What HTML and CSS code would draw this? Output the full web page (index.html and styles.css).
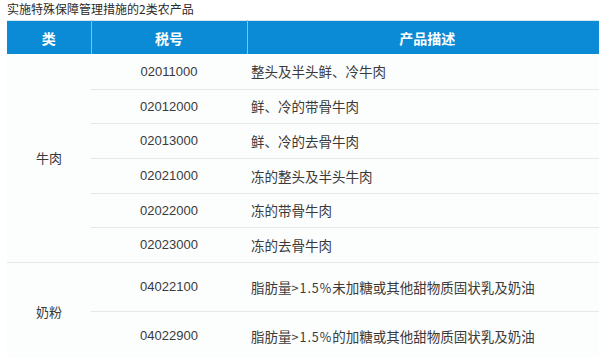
FILE: index.html
```html
<!DOCTYPE html>
<html lang="zh">
<head>
<meta charset="utf-8">
<link rel="stylesheet" href="styles.css">
</head>
<body>
<div class="title">实施特殊保障管理措施的2类农产品</div>
<table class="tbl">
  <colgroup>
    <col class="c1"><col class="c2"><col class="c3">
  </colgroup>
  <thead>
    <tr><th>类</th><th>税号</th><th>产品描述</th></tr>
  </thead>
  <tbody>
    <tr class="r35">
      <td class="cat grp-end" rowspan="6">牛肉</td>
      <td class="code">02011000</td><td class="desc">整头及半头鲜、冷牛肉</td>
    </tr>
    <tr class="r34"><td class="code">02012000</td><td class="desc">鲜、冷的带骨牛肉</td></tr>
    <tr class="r35"><td class="code">02013000</td><td class="desc">鲜、冷的去骨牛肉</td></tr>
    <tr class="r35"><td class="code">02021000</td><td class="desc">冻的整头及半头牛肉</td></tr>
    <tr class="r34"><td class="code">02022000</td><td class="desc">冻的带骨牛肉</td></tr>
    <tr class="r35"><td class="code">02023000</td><td class="desc">冻的去骨牛肉</td></tr>
    <tr class="r49">
      <td class="cat" rowspan="2">奶粉</td>
      <td class="code">04022100</td><td class="desc">脂肪量<span class="half">&gt;1.5%</span>未加糖或其他甜物质固状乳及奶油</td>
    </tr>
    <tr class="r49"><td class="code">04022900</td><td class="desc">脂肪量<span class="half">&gt;1.5%</span>的加糖或其他甜物质固状乳及奶油</td></tr>
  </tbody>
</table>
</body>
</html>
```
FILE: styles.css
```css
html, body {
  margin: 0;
  padding: 0;
  background: #ffffff;
  overflow: hidden;
}
body {
  padding: 0 0 0 7px;
  font-family: "Liberation Sans", "Noto Sans CJK SC", sans-serif;
  color: #3a3a3a;
}
.title {
  font-size: 12px;
  line-height: 18px;
  height: 20px;
  color: #2a2a2a;
  font-family: "Noto Sans CJK SC", sans-serif;
}
.tbl {
  border-collapse: collapse;
  table-layout: fixed;
  width: 600px;
  border-top: 1px solid #d8e8f2;
}
.c1 { width: 84px; }
.c2 { width: 156px; }
.c3 { width: 360px; }
.tbl th {
  background: #0b8bd5;
  color: #ffffff;
  font-family: "Noto Sans CJK SC", sans-serif;
  font-weight: bold;
  font-size: 14px;
  height: 33px;
  padding: 0;
  text-align: center;
  border-left: 1px solid #7fc2ea;
}
.tbl th:first-child { border-left: none; }
.tbl td {
  padding: 0;
  background: #fcfdfd;
  font-size: 13px;
  vertical-align: middle;
}
.tbl td.code, .tbl td.desc {
  border-bottom: 1px solid #e6e8e8;
}
.cat {
  text-align: center;
  font-family: "Noto Sans CJK SC", sans-serif;
  font-size: 13px;
  color: #3a3a3a;
}
.cat.grp-end { border-bottom: 1px solid #e6e8e8; }
.code {
  text-align: center;
  font-family: "Liberation Sans", sans-serif;
  font-size: 12.5px;
  color: #3a3a3a;
}
.desc {
  padding-left: 4px !important;
  font-family: "Noto Sans CJK SC", sans-serif;
  font-size: 13.5px !important;
  color: #3a3a3a;
  white-space: nowrap;
}
.half {
  font-size: 12.5px;
  letter-spacing: 1px;
}
.r35 { height: 35px; }
.r34 { height: 34px; }
.r49 { height: 49px; }
```
